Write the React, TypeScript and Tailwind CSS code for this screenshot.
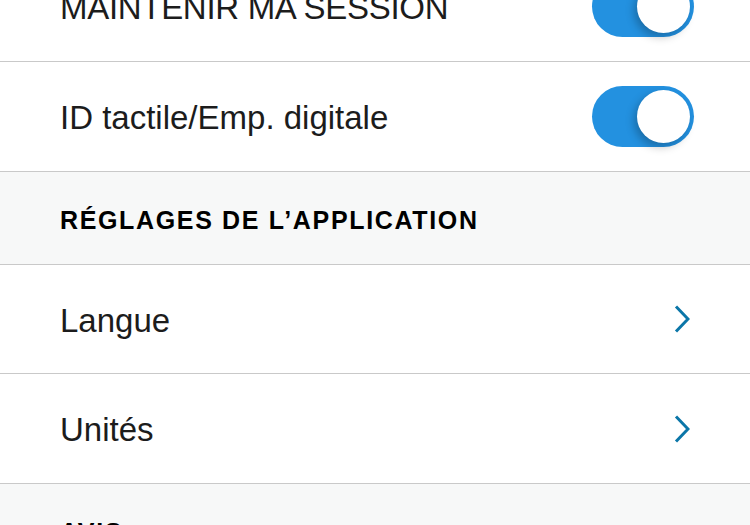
import React from "react";

function Toggle() {
  return (
    <div className="flex h-[61px] w-[102px] items-center justify-end rounded-full bg-[#2391e0] p-[4px]">
      <div className="h-[53px] w-[53px] rounded-full bg-white shadow-[-3px_4px_8px_rgba(0,0,0,0.25)]" />
    </div>
  );
}

function Chevron() {
  return (
    <svg width="16" height="28" viewBox="0 0 16 28" fill="none">
      <path d="M2 1.5 L14 14 L2 26.5" stroke="#0b76a8" strokeWidth="3" strokeLinecap="butt" strokeLinejoin="miter" />
    </svg>
  );
}

function Row({ label, right, h = "h-[110px]", upper = false }: { label: string; right: React.ReactNode; h?: string; upper?: boolean }) {
  return (
    <div className={`flex ${h} items-center justify-between border-b border-[#c9c9c9] bg-white pl-[60px] pr-[56px]`}>
      <span className={`text-[33px] leading-none text-[#1c1c1c] ${upper ? "tracking-[-0.3px]" : ""} translate-y-[1px]`}>{label}</span>
      {right}
    </div>
  );
}

function Header({ label, h = "h-[93px]" }: { label: string; h?: string }) {
  return (
    <div className={`flex ${h} items-center border-b border-[#c9c9c9] bg-[#f7f8f8] pl-[60px]`}>
      <span className="translate-y-[2px] text-[25px] font-bold leading-none tracking-[1.65px] text-black">{label}</span>
    </div>
  );
}

export default function App() {
  return (
    <div className="h-[525px] w-[750px] overflow-hidden bg-white" style={{ fontFamily: '"Liberation Sans", Arial, sans-serif' }}>
      <div className="mt-[-48px]">
        <Row label="MAINTENIR MA SESSION" upper right={<Toggle />} />
        <Row label="ID tactile/Emp. digitale" right={<Toggle />} />
        <Header label="RÉGLAGES DE L’APPLICATION" />
        <Row label="Langue" h="h-[109px]" right={<div className="mr-[4px]"><Chevron /></div>} />
        <Row label="Unités" right={<div className="mr-[4px]"><Chevron /></div>} />
        <Header label="AVIS" />
      </div>
    </div>
  );
}
